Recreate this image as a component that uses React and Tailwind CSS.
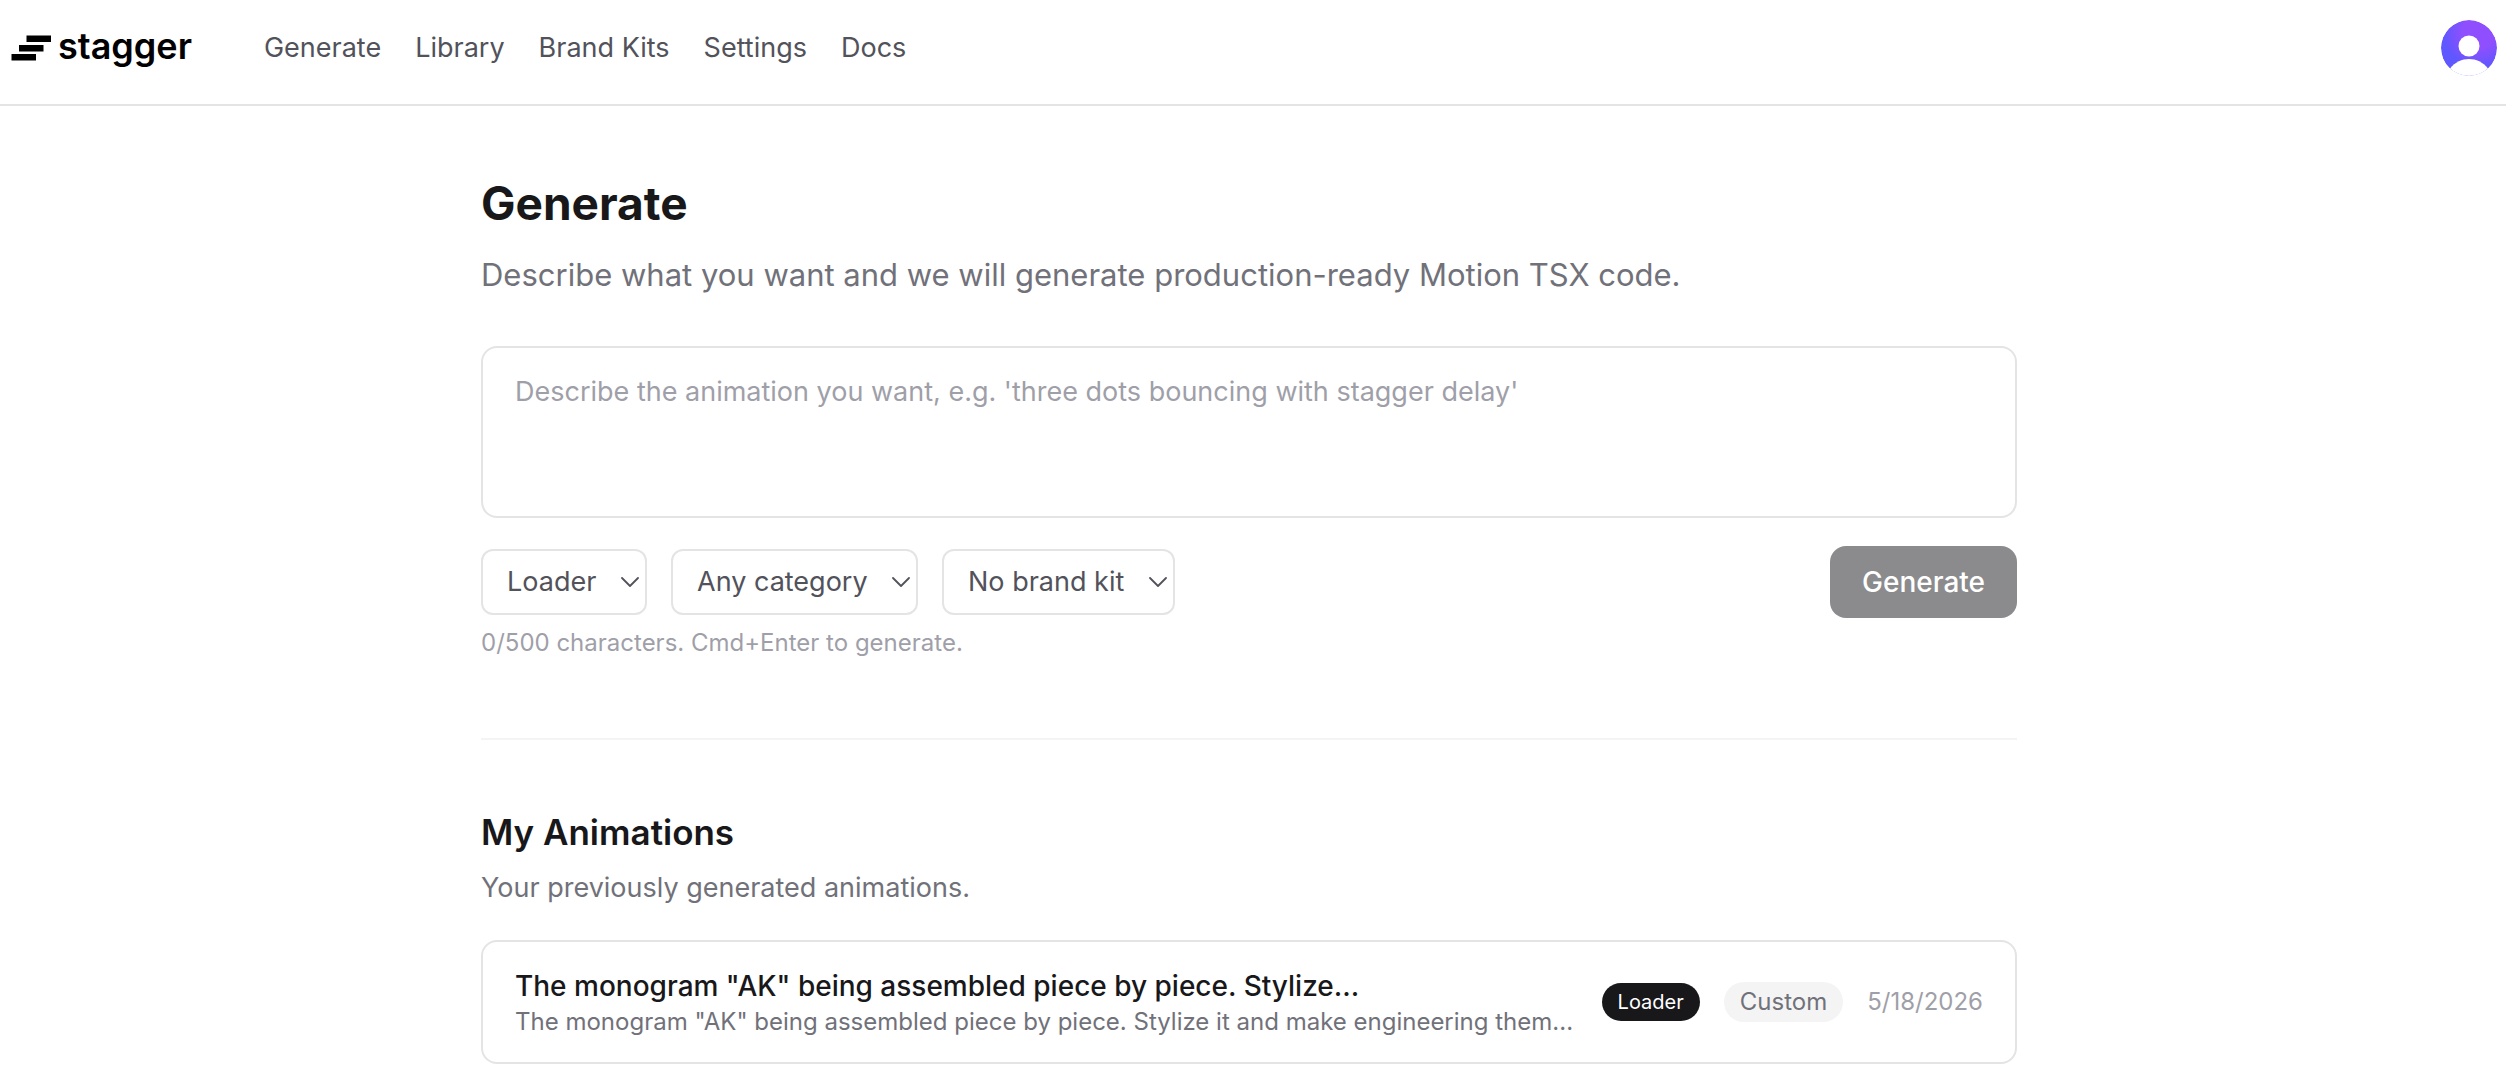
const navItems = ["Generate", "Library", "Brand Kits", "Settings", "Docs"];

const filters = [
  { id: "type", label: "Animation type", value: "Loader" },
  { id: "category", label: "Category", value: "Any category" },
  { id: "brand-kit", label: "Brand kit", value: "No brand kit" },
];

const animations = [
  {
    title: 'The monogram "AK" being assembled piece by piece. Stylize...',
    prompt: 'The monogram "AK" being assembled piece by piece. Stylize it and make engineering them...',
    type: "Loader",
    category: "Custom",
    date: "5/18/2026",
  },
];

function Logo() {
  return (
    <a href="#" className="flex items-center gap-[7px] text-black">
      <svg viewBox="0 0 40 26" className="h-[26px] w-10" fill="currentColor" aria-hidden="true">
        <rect x="15.5" y="0.5" width="24.5" height="6.5" />
        <rect x="8" y="10" width="24.5" height="6.5" />
        <rect x="0.5" y="19" width="24.5" height="6.5" />
      </svg>
      <span className="pb-1 text-[36px] font-semibold leading-[48px]">stagger</span>
    </a>
  );
}

function Avatar() {
  return (
    <button type="button" aria-label="Account" className="size-14 overflow-hidden rounded-full">
      <svg viewBox="0 0 56 56" className="size-14" aria-hidden="true">
        <defs>
          <radialGradient id="avatar-fill" gradientUnits="userSpaceOnUse" cx="38" cy="12" r="40">
            <stop offset="0.4" stopColor="#8f4fff" />
            <stop offset="0.9" stopColor="#5f57ff" />
          </radialGradient>
        </defs>
        <circle cx="28" cy="28" r="28" fill="url(#avatar-fill)" />
        <circle cx="28" cy="26" r="10.5" fill="#fff" />
        <path d="M9 48.500C14 42 21 39 28 39s14 3 19 9.500A28 28 0 0 1 28 56 28 28 0 0 1 9 48.500Z" fill="#fff" />
      </svg>
    </button>
  );
}

function Filter({ id, label, value }) {
  return (
    <div className="relative">
      <select
        id={id}
        aria-label={label}
        defaultValue={value}
        className="block appearance-none rounded-xl border-2 border-[#e4e4e4] bg-white py-[11px] pl-6 pr-12 text-[27px] leading-10 text-[#52525b]"
      >
        <option>{value}</option>
      </select>
      <svg
        viewBox="0 0 18 10"
        className="pointer-events-none absolute right-2 top-1/2 h-[10px] w-[18px] -translate-y-1/2"
        fill="none"
        stroke="#52525b"
        strokeWidth="1.8"
        strokeLinecap="round"
        strokeLinejoin="round"
        aria-hidden="true"
      >
        <path d="M1 1l8 8 8-8" />
      </svg>
    </div>
  );
}

export default function App() {
  return (
    <div className="min-h-screen bg-white font-['Inter',sans-serif] text-[#18181b]">
      <header className="flex items-start justify-between border-b-2 border-[#e4e4e4] pb-7 pl-[11px] pr-[9px] pt-5">
        <div className="flex h-14 items-center gap-[72px]">
          <Logo />
          <nav className="flex gap-[34px] text-[27px] leading-10 text-[#52525b]">
            {navItems.map((item) => (
              <a key={item} href="#">{item}</a>
            ))}
          </nav>
        </div>
        <Avatar />
      </header>

      <div className="pr-2">
        <main className="mx-auto max-w-[1536px] pt-16">
          <h1 className="pt-px text-[46px] font-bold leading-[64px]">Generate</h1>
          <p className="mt-4 text-[31px] leading-[48px] text-[#71717a]">
            Describe what you want and we will generate production-ready Motion TSX code.
          </p>

          <form className="mt-[47px]" onSubmit={(event) => event.preventDefault()}>
            <textarea
              rows={3}
              aria-label="Animation description"
              placeholder="Describe the animation you want, e.g. 'three dots bouncing with stagger delay'"
              className="block w-full resize-none rounded-2xl border-2 border-[#e4e4e4] px-8 py-6 text-[27px] leading-10 placeholder:text-[#9f9fa9]"
            />
            <div className="mt-7 flex items-center justify-between">
              <div className="flex gap-6">
                {filters.map((filter) => (
                  <Filter key={filter.id} {...filter} />
                ))}
              </div>
              <button type="submit" disabled className="rounded-2xl bg-[#8b8b8d] px-8 py-4 text-[28px] font-medium leading-10 text-white">
                Generate
              </button>
            </div>
            <p className="mt-2 text-2xl leading-[34px] text-[#9f9fa9]">0/500 characters. Cmd+Enter to generate.</p>
          </form>

          <section className="mt-[78px] border-t-2 border-[#f4f4f4] pt-16">
            <h2 className="text-[35px] font-semibold leading-[56px]">My Animations</h2>
            <p className="mt-2 text-[27px] leading-10 text-[#71717a]">Your previously generated animations.</p>
            <ul className="mt-8">
              {animations.map((item) => (
                <li key={item.title} className="flex items-center gap-6 rounded-2xl border-2 border-[#e4e4e4] px-8 py-6">
                  <div className="min-w-0 flex-1">
                    <h3 className="truncate text-[28px] font-medium leading-10">{item.title}</h3>
                    <p className="truncate text-2xl leading-8 text-[#71717a]">{item.prompt}</p>
                  </div>
                  <div className="flex items-center gap-6">
                    <span className="rounded-full bg-[#18181b] px-4 py-1 text-xl leading-[30px] text-white">{item.type}</span>
                    <span className="rounded-full bg-[#f4f4f4] px-4 py-1 text-2xl leading-8 text-[#71717a]">{item.category}</span>
                    <time dateTime="2026-05-18" className="text-2xl leading-8 text-[#9f9fa9]">{item.date}</time>
                  </div>
                </li>
              ))}
            </ul>
          </section>
        </main>
      </div>
    </div>
  );
}
